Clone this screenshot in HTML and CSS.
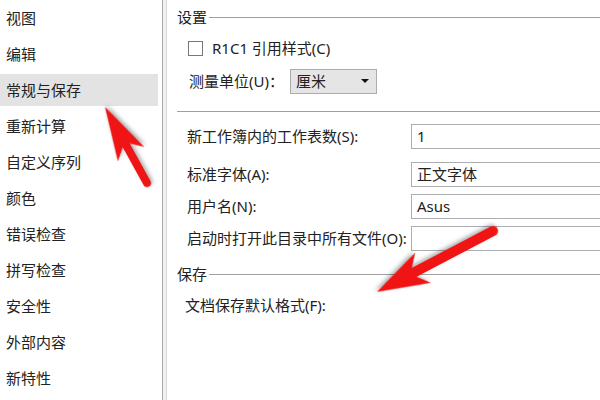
FILE: index.html
```
<!DOCTYPE html>
<html lang="zh-CN">
<head>
<meta charset="utf-8">
<title>选项</title>
<link rel="stylesheet" href="styles.css">
</head>
<body>
<div class="app">
  <nav class="sidebar">
    <div class="nav-item">视图</div>
    <div class="nav-item">编辑</div>
    <div class="nav-item active">常规与保存</div>
    <div class="nav-item">重新计算</div>
    <div class="nav-item">自定义序列</div>
    <div class="nav-item">颜色</div>
    <div class="nav-item">错误检查</div>
    <div class="nav-item">拼写检查</div>
    <div class="nav-item">安全性</div>
    <div class="nav-item">外部内容</div>
    <div class="nav-item">新特性</div>
  </nav>
  <div class="divider"></div>
  <main class="panel">
    <div class="group-title"><span>设置</span><i class="rule"></i></div>
    <div class="check-row">
      <svg class="checkbox" width="15" height="15" viewBox="0 0 15 15"><rect x="0.5" y="0.5" width="14" height="14" fill="#fff" stroke="#777"></rect></svg>
      <span>R1C1 引用样式(C)</span>
    </div>
    <div class="unit-row">
      <span class="unit-label">测量单位(U)：</span>
      <div class="select"><span>厘米</span><i class="caret"></i></div>
    </div>
    <div class="sep"></div>
    <div class="field-list">
      <div class="field first"><span class="field-label">新工作簿内的工作表数(S):</span><div class="input">1</div></div>
      <div class="field"><span class="field-label">标准字体(A):</span><div class="input">正文字体</div></div>
      <div class="field"><span class="field-label">用户名(N):</span><div class="input">Asus</div></div>
      <div class="field"><span class="field-label">启动时打开此目录中所有文件(O):</span><div class="input"></div></div>
    </div>
    <div class="group-title save"><span>保存</span><i class="rule"></i></div>
    <div class="format-row">文档保存默认格式(F):</div>
  </main>
  <svg class="annotations" width="600" height="400" viewBox="0 0 600 400">
    <g class="arrow" transform="translate(147 183) rotate(-118.9)">
      <line x1="0" y1="0" x2="47" y2="0" stroke-width="8" stroke-linecap="round"></line>
      <polygon points="87,0 33,-15 43,-4 43,4 33,15"></polygon>
    </g>
    <g class="arrow" transform="translate(493 231) rotate(152.3)">
      <line x1="0" y1="0" x2="92" y2="0" stroke-width="10" stroke-linecap="round"></line>
      <polygon points="131,0 79,-17 89,-5 89,5 79,17"></polygon>
    </g>
  </svg>
</div>
</body>
</html>
```
FILE: styles.css
```
* { box-sizing: border-box; }
html, body { margin: 0; padding: 0; background: #fff; }
body {
  font-family: "Noto Sans", "Noto Sans CJK SC", sans-serif;
  font-size: 15px;
  color: #222;
}
.app {
  position: relative;
  width: 600px;
  height: 400px;
  display: flex;
  overflow: hidden;
}
.sidebar {
  width: 162px;
  flex: none;
  display: flex;
  flex-direction: column;
}
.nav-item {
  height: 32px;
  margin: 2px 4px 2px 0;
  padding-left: 6px;
  display: flex;
  align-items: center;
  line-height: 1;
}
.nav-item.active { background: #e3e3e3; }
.divider {
  width: 5px;
  flex: none;
  background: #f0f0f0;
  border-left: 1px solid #a9a9a9;
  border-right: 1px solid #d6d6d6;
}
.panel {
  flex: 1;
  min-width: 0;
  padding-left: 10px;
  overflow: hidden;
  display: flex;
  flex-direction: column;
}
.group-title {
  height: 34px;
  display: flex;
  align-items: center;
  line-height: 1;
}
.group-title .rule {
  flex: 1;
  height: 0;
  border-top: 1px solid #a0a0a0;
  margin-left: 2px;
}
.group-title.save { height: 24px; margin-top: 11px; }
.check-row {
  height: 28px;
  padding-left: 11px;
  display: flex;
  align-items: center;
  line-height: 1;
}
.checkbox {
  flex: none;
  display: block;
  margin-right: 9px;
}
.unit-row {
  height: 38px;
  padding-left: 12px;
  display: flex;
  align-items: center;
  line-height: 1;
}
.unit-label { width: 101px; flex: none; }
.select {
  width: 87px;
  flex: none;
  height: 25px;
  background: #e5e5e5;
  border: 1px solid #acacac;
  display: flex;
  align-items: center;
  padding: 0 0 0 5px;
  justify-content: space-between;
}
.caret {
  width: 0;
  height: 0;
  border-left: 4px solid transparent;
  border-right: 4px solid transparent;
  border-top: 4px solid #111;
  margin-right: 7px;
}
.sep {
  height: 1px;
  background: #a0a0a0;
  margin-top: 11px;
  margin-left: 0;
}
.field-list {
  padding-top: 12px;
  display: flex;
  flex-direction: column;
  gap: 7px;
}
.field {
  height: 25px;
  padding-left: 10px;
  display: flex;
  align-items: center;
  line-height: 1;
}
.field.first { margin-bottom: 6px; }
.field-label { width: 224px; flex: none; white-space: nowrap; }
.input {
  width: 200px;
  flex: none;
  height: 25px;
  border: 1px solid #abadb3;
  background: #fff;
  padding-left: 5px;
  display: flex;
  align-items: center;
}
.format-row {
  height: 22px;
  margin-top: 8px;
  padding-left: 8px;
  display: flex;
  align-items: center;
  line-height: 1;
}
.annotations {
  position: absolute;
  left: 0;
  top: 0;
  pointer-events: none;
}
.arrow {
  fill: #f01414;
  stroke: #f01414;
  filter: drop-shadow(1px 2px 2px rgba(0, 0, 0, 0.35));
}
.arrow polygon { stroke: none; }
```
